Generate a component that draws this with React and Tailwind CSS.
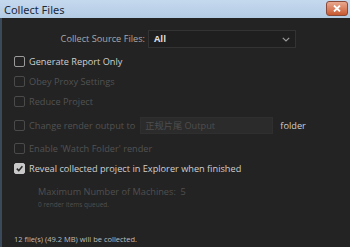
import React from 'react';

function Check({ checked, disabled }) {
  return (
    <span
      className={`w-[11px] h-[11px] rounded-[2px] border flex items-center justify-center shrink-0 ${
        checked ? 'bg-[#c9c9c9] border-[#c9c9c9]' : disabled ? 'border-[#4a4a4a]' : 'border-[#9a9a9a]'
      }`}
    >
      {checked && (
        <svg width="9" height="9" viewBox="0 0 10 10">
          <path d="M2 5.2 L4.2 7.4 L8.2 2.6" fill="none" stroke="#2a2a2a" strokeWidth="1.8" />
        </svg>
      )}
    </span>
  );
}

function Row({ label, checked, disabled, children, className = '' }) {
  return (
    <div className={`flex items-center gap-[4px] ${className}`}>
      <Check checked={checked} disabled={disabled} />
      <span className={disabled ? 'text-[#525252]' : 'text-[#cfcfcf]'}>{label}</span>
      {children}
    </div>
  );
}

export default function App() {
  return (
    <div className="w-[350px] h-[247px] flex flex-col overflow-hidden text-[9.2px] leading-none" style={{ fontFamily: '"Open Sans", "Noto Sans CJK SC", sans-serif' }}>
      {/* title bar */}
      <div className="h-[18px] shrink-0 bg-gradient-to-b from-[#c5d9ee] to-[#b3cbe4] flex items-center justify-between pl-[4px] pr-[2px]">
        <span className="text-[11px] text-[#1b2a3a]" style={{ fontFamily: '"Noto Sans", sans-serif' }}>Collect Files</span>
        <div className="w-[22px] h-[15px] rounded-[3px] border border-[#8a4a3a] bg-gradient-to-b from-[#e8a890] to-[#c8582e] flex items-center justify-center mb-[1px]">
          <svg width="8" height="7" viewBox="0 0 8 7">
            <path d="M1 0.5 L7 6.5 M7 0.5 L1 6.5" stroke="#fff" strokeWidth="1.8" />
          </svg>
        </div>
      </div>

      {/* body */}
      <div className="flex-1 flex bg-[#232323]">
        <div className="w-[2px] bg-[#3b4a5a]" />
        <div className="flex-1 flex flex-col pl-[12px] pt-[12px]">
          <div className="flex items-center h-[18px] mb-[8px]">
            <span className="w-[134px] text-right pr-[3px] text-[#a8a8a8]">Collect Source Files:</span>
            <div className="w-[148px] h-[18px] bg-[#1f1f1f] border border-[#333] flex items-center justify-between px-[5px]">
              <span className="font-bold text-[#dcdcdc]">All</span>
              <svg width="8" height="5" viewBox="0 0 8 5">
                <path d="M0.8 0.8 L4 4 L7.2 0.8" fill="none" stroke="#9a9a9a" strokeWidth="1.2" />
              </svg>
            </div>
          </div>

          <div className="flex flex-col gap-[9px]">
            <Row label="Generate Report Only" />
            <Row label="Obey Proxy Settings" disabled />
            <Row label="Reduce Project" disabled className="mb-[1px]" />
            <Row label="Change render output to" disabled>
              <div className="w-[133px] h-[17px] ml-[1px] bg-[#2b2b2b] border border-[#2f2f2f] flex items-center px-[4px] text-[#4e4e4e]">
                正规片尾 Output
              </div>
              <span className="ml-[3px] text-[#cfcfcf]">folder</span>
            </Row>
            <Row label="Enable 'Watch Folder' render" disabled />
            <Row label="Reveal collected project in Explorer when finished" checked />
          </div>

          <div className="pl-[24px] mt-[13px] text-[#4f4f4f]">
            <div>Maximum Number of Machines:&nbsp;&nbsp;5</div>
            <div className="text-[6.5px] mt-[6px]">0 render items queued.</div>
          </div>

          <div className="mt-auto mb-[4px] text-[7.5px] text-[#bdbdbd]">12 file(s) (49.2 MB) will be collected.</div>
        </div>
      </div>
    </div>
  );
}
